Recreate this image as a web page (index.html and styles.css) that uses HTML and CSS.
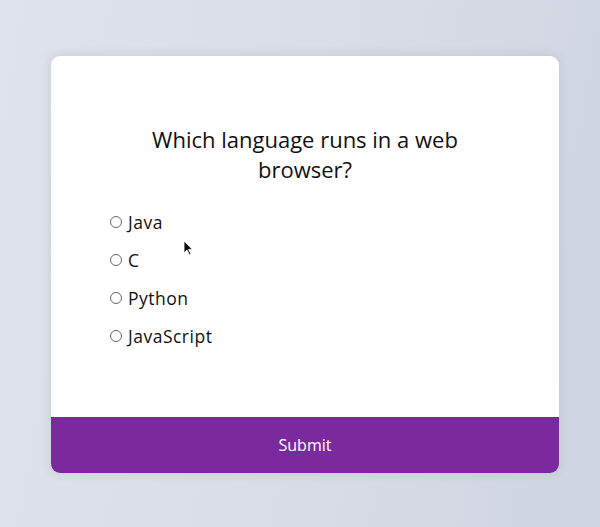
FILE: index.html
```html
<!DOCTYPE html>
<html lang="en">
<head>
<meta charset="utf-8">
<title>Quiz</title>
<link rel="stylesheet" href="styles.css">
</head>
<body>
<div class="quiz">
  <div class="quiz-body">
    <h2 class="question">Which language runs in a web browser?</h2>
    <ul class="answers">
      <li class="answer"><span class="radio"></span><label>Java</label></li>
      <li class="answer"><span class="radio"></span><label>C</label></li>
      <li class="answer"><span class="radio"></span><label>Python</label></li>
      <li class="answer"><span class="radio"></span><label>JavaScript</label></li>
    </ul>
  </div>
  <button class="submit">Submit</button>
  <svg class="cursor" width="10" height="16" viewBox="0 0 10 16"><path d="M1 1 L1 13 L4 10 L6.5 15 L8 14.3 L5.6 9.4 L9.5 9.4 Z" fill="#111" stroke="#fff" stroke-width="0.8"/></svg>
</div>
</body>
</html>
```
FILE: styles.css
```css
html, body {
  margin: 0;
  padding: 0;
}
body {
  width: 600px;
  height: 527px;
  overflow: hidden;
  background: linear-gradient(100deg, #dfe3eb 0%, #d9dde7 50%, #cfd5e1 100%);
  font-family: "Open Sans", "DejaVu Sans", sans-serif;
  padding-top: 56px;
  box-sizing: border-box;
}
.quiz {
  position: relative;
  margin-left: 51px;
  width: 508px;
  background: #fff;
  border-radius: 9px;
  overflow: hidden;
  box-shadow: 0 0 10px 2px rgba(100, 100, 120, 0.12);
}
.quiz-body {
  padding: 68px 59px 62px;
}
.question {
  margin: 0 40px 19px;
  font-size: 22px;
  font-weight: 400;
  line-height: 30px;
  text-align: center;
  color: #111;
}
.answers {
  list-style: none;
  margin: 0;
  padding: 0;
}
.answer {
  display: flex;
  align-items: center;
  height: 38px;
  font-size: 17.5px;
  letter-spacing: 0.5px;
  color: #111;
}
.radio {
  width: 10px;
  height: 10px;
  border: 1px solid #666;
  border-radius: 50%;
  margin-right: 6px;
  flex: none;
}
.submit {
  display: block;
  width: 100%;
  height: 56px;
  border: none;
  background: #7b2a9e;
  color: #fff;
  font-family: inherit;
  font-size: 16px;
}
.cursor {
  position: absolute;
  left: 132px;
  top: 184px;
}
```
